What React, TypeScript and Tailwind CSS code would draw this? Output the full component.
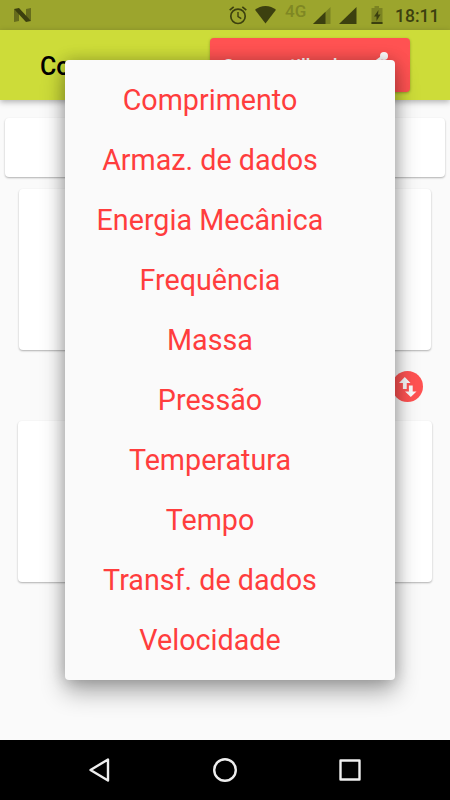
const categories = [
  "Comprimento",
  "Armaz. de dados",
  "Energia Mecânica",
  "Frequência",
  "Massa",
  "Pressão",
  "Temperatura",
  "Tempo",
  "Transf. de dados",
  "Velocidade",
];

function StatusBar() {
  return (
    <div className="flex h-[30px] shrink-0 items-start bg-[#9ca52d] pl-[13px] pr-[11px] text-[#3c400f]">
      <svg className="mt-2" width="19" height="14" viewBox="0 0 19 14">
        <path d="M1 1L6 4.5V13L1 14Z" fill="#666c1c" />
        <path d="M18 0V13L13 9.5V1Z" fill="#666c1c" />
        <path d="M1 1L6 0L18 13L13 14Z" fill="#3c400f" />
      </svg>
      <div className="ml-auto flex h-full items-start">
        <svg className="mt-[6px]" width="18" height="19" viewBox="0 0 18 19" fill="none" stroke="currentColor" strokeWidth="1.7">
          <circle cx="9" cy="10.3" r="7.2" />
          <path d="M9 6v4.7l3.3 2" strokeWidth="1.4" />
          <path d="M.7 4.2L4.7.9M17.3 4.2L13.3.9" />
        </svg>
        <svg className="ml-2 mt-[6px]" width="21" height="18" viewBox="0 0 21 18" fill="currentColor">
          <path d="M10.5 17.5L0 3.8C3 1.300 6.500 0 10.500 0S18 1.300 21 3.800Z" />
        </svg>
        <span className="ml-[9px] w-[22px] whitespace-nowrap text-[17px] font-medium leading-[22px] text-[#7f8723]">4G</span>
        <svg className="ml-[6px] mt-[7px]" width="18" height="17" viewBox="0 0 18 17">
          <path d="M17.5 0V17H0Z" fill="#7b8322" />
          <path d="M12.5 4.8V17H0Z" fill="#3c400f" />
        </svg>
        <svg className="ml-2 mt-[7px]" width="18" height="17" viewBox="0 0 18 17">
          <path d="M17.5 0V17H0Z" fill="currentColor" />
        </svg>
        <svg className="ml-[14px] mt-[6px]" width="12" height="18" viewBox="0 0 12 18">
          <path d="M3.5 0h4.500v2H11.500v16H.5V2h3z" fill="#7b8322" />
          <path d="M.5 16h11v2H.5zM7.500 4L3 10.500h2.500V15L9.500 8.500H7z" fill="#3c400f" />
        </svg>
        <span className="ml-3 mt-[5px] w-11 whitespace-nowrap text-[17.500px] font-medium leading-[22px]">18:11</span>
      </div>
    </div>
  );
}

function Toolbar() {
  return (
    <header className="z-10 flex h-[70px] shrink-0 items-start justify-between bg-[#cddc39] px-10 pt-2 shadow-[0_2px_6px_rgba(0,0,0,0.3)]">
      <h1 className="mt-[14px] text-[25px] font-medium leading-[30px] text-black">Conversor</h1>
      <button className="flex h-[54px] w-[200px] items-center justify-between rounded-sm bg-[#ff5252] pl-3 pr-[21px] text-[19px] font-medium text-white shadow-[0_1px_3px_rgba(0,0,0,0.3)]">
        <span className="pt-[3px]">Compartilhador</span>
        <svg width="18" height="26" viewBox="0 0 18 26" fill="currentColor">
          <path d="M13 4L4 10.500L13 20" fill="none" stroke="currentColor" strokeWidth="3" />
          <circle cx="13" cy="4" r="4" />
          <circle cx="4" cy="12" r="4" />
          <circle cx="13" cy="21" r="4" />
        </svg>
      </button>
    </header>
  );
}

function CategoryDialog() {
  return (
    <div className="absolute left-[65px] top-[60px] z-20 w-[330px] rounded-sm bg-[#fafafa] pb-[9px] pr-10 pt-[11px] shadow-[0_12px_24px_rgba(0,0,0,0.32),0_0_16px_rgba(0,0,0,0.22)]">
      <ul>
        {categories.map((name) => (
          <li key={name} className="flex h-[60px] items-center justify-center whitespace-nowrap text-[28.7px] text-[#ff3d3d]">
            {name}
          </li>
        ))}
      </ul>
    </div>
  );
}

export default function App() {
  return (
    <div className="relative flex h-[800px] w-[450px] flex-col overflow-hidden bg-[#fafafa] font-['Roboto',sans-serif]">
      <StatusBar />
      <Toolbar />
      <main className="flex flex-1 flex-col pt-[18px]">
        <div className="mx-[5px] h-[59px] rounded bg-white shadow-[0_1px_2px_rgba(0,0,0,0.3)]" />
        <div className="mx-[19px] mt-3 h-[161px] rounded bg-white shadow-[0_1px_2px_rgba(0,0,0,0.3)]" />
        <div className="flex h-[71px] items-center justify-end pr-[27px] pt-[2px]">
          <button className="flex h-[31px] w-[31px] items-center justify-center rounded-full bg-[#ff5252]">
            <svg width="18" height="20" viewBox="0 0 18 20" fill="#fafafa">
              <path d="M5.800 0L11.500 6H7.700V12H3.900V6H0ZM9.900 8.500H13.700V14.500H17.500L11.800 20L6 14.500H9.900Z" />
            </svg>
          </button>
        </div>
        <div className="mx-[18px] h-[161px] rounded bg-white shadow-[0_1px_2px_rgba(0,0,0,0.3)]" />
      </main>
      <nav className="flex h-[60px] shrink-0 items-center justify-center bg-black">
        <svg width="272" height="26" viewBox="0 0 272 26" fill="none" stroke="#eee" strokeWidth="2.400" strokeLinejoin="round">
          <path d="M19 2.500V23.500L1.500 13Z" />
          <circle cx="136" cy="13" r="10.800" />
          <rect x="251.500" y="3.500" width="19" height="19" />
        </svg>
      </nav>
      <CategoryDialog />
    </div>
  );
}
